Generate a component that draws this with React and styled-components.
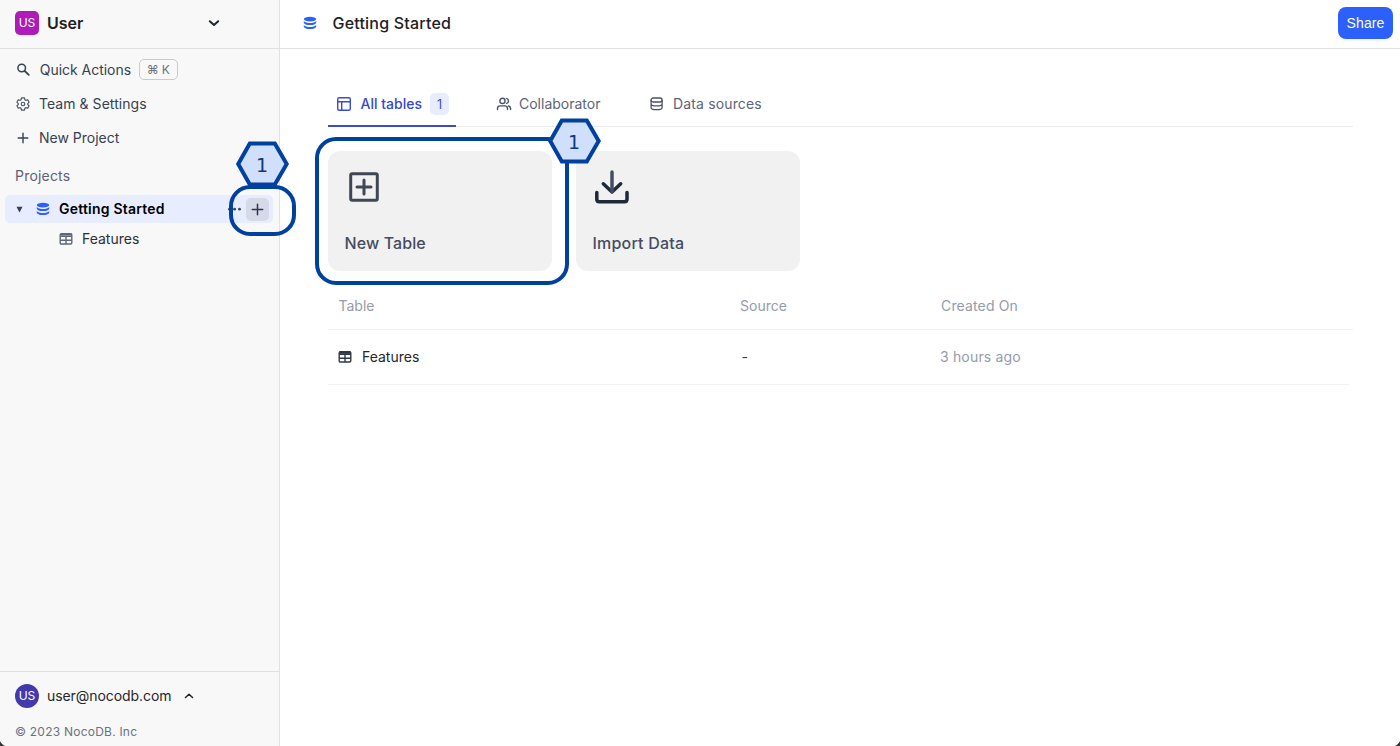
import React from 'react';
import styled, { createGlobalStyle } from 'styled-components';

const Global = createGlobalStyle`
  *, *::before, *::after { box-sizing: border-box; }
  body { margin: 0; overflow: hidden; font-family: Inter, sans-serif; font-size: 14px; color: #374151; }
  svg { display: block; flex: none; }
`;

const Shell = styled.div`
  position: relative;
  display: flex;
  width: 1400px;
  height: 746px;
  background: #fff;
  overflow: hidden;
`;

const Text = styled.span`
  font-size: ${(p) => p.$size || 14}px;
  font-weight: ${(p) => p.$weight || 400};
  letter-spacing: ${(p) => p.$track || 0}px;
  color: ${(p) => p.$color || '#374151'};
  line-height: 20px;
  white-space: nowrap;
`;

/* Sidebar */
const Sidebar = styled.aside`
  display: flex;
  flex-direction: column;
  width: 280px;
  flex: none;
  background: #f8f8f8;
  border-right: 1px solid #e1e1e3;
`;

const Workspace = styled.div`
  display: flex;
  align-items: center;
  height: 49px;
  padding: 0 59px 3px 15px;
  border-bottom: 1px solid #e1e1e3;
  gap: 8px;
  > svg { margin-left: auto; }
`;

const Avatar = styled.div`
  display: grid;
  place-items: center;
  width: 24px;
  height: 24px;
  flex: none;
  border-radius: ${(p) => (p.$round ? '50%' : '5px')};
  background: ${(p) => (p.$round ? '#4338ac' : '#af1bb8')};
  color: #fff;
  font-size: 12px;
  line-height: 24px;
`;

const Nav = styled.nav`
  display: flex;
  flex-direction: column;
  padding-top: 4px;
`;

const NavItem = styled.div`
  display: flex;
  align-items: center;
  height: 34px;
  padding-left: 15px;
  gap: ${(p) => p.$gap || 8}px;
`;

const IconBox = styled.span`
  display: grid;
  place-items: center;
  width: 16px;
  height: 16px;
`;

const Shortcut = styled.kbd`
  display: flex;
  align-items: center;
  justify-content: center;
  gap: 3px;
  width: 39px;
  height: 21px;
  margin: 0 0 1px -1px;
  border: 1px solid #c9cbd1;
  border-radius: 5px;
  font: 12px/18px Inter, sans-serif;
  color: #6b7280;
`;

const SectionTitle = styled.div`
  display: flex;
  height: 40px;
  align-items: center;
  padding: 2px 0 0 15px;
`;

const ProjectRow = styled.div`
  display: flex;
  align-items: center;
  width: 268px;
  height: 28px;
  margin-left: 5px;
  padding: 0 4px 0 10px;
  border-radius: 5px;
  background: #e7edff;
`;

const ProjectIcon = styled.span`
  margin: 0 9px 0 12px;
`;

const More = styled.span`
  margin-left: auto;
  margin-right: 4px;
`;

const AddButton = styled.button`
  display: grid;
  place-items: center;
  width: 23px;
  height: 23px;
  padding: 0;
  border: 0;
  border-radius: 5px;
  background: #d5d9e8;
`;

const TableItem = styled.div`
  display: flex;
  align-items: center;
  height: 32px;
  padding-left: 59px;
  gap: 9px;
`;

const SideFooter = styled.footer`
  display: flex;
  flex-direction: column;
  height: 75px;
  margin-top: auto;
  padding: 12px 0 0 15px;
  border-top: 1px solid #e1e1e3;
`;

const Account = styled.div`
  display: flex;
  align-items: center;
  height: 24px;
  gap: 8px;
  > svg { margin-left: 4px; }
`;

const Copyright = styled.div`
  margin-top: 14px;
`;

/* Main pane */
const Main = styled.main`
  display: flex;
  flex-direction: column;
  flex: 1;
  min-width: 0;
`;

const TopBar = styled.header`
  display: flex;
  align-items: center;
  height: 49px;
  padding: 0 7px 3px 23px;
  border-bottom: 1px solid #e1e1e3;
  gap: 15.5px;
`;

const ShareButton = styled.button`
  width: 55px;
  height: 32px;
  margin-left: auto;
  padding: 0;
  border: 0;
  border-radius: 8px;
  background: #2b60fb;
  box-shadow: 0 2px 2px rgba(0, 0, 0, 0.04);
`;

const Content = styled.section`
  display: flex;
  flex-direction: column;
  padding: 32px 47px 0 48px;
`;

const Tabs = styled.div`
  display: flex;
  height: 46px;
  border-bottom: 1px solid #ebebed;
`;

const Tab = styled.div`
  display: flex;
  align-items: center;
  height: 46px;
  width: ${(p) => p.$width}px;
  margin-right: ${(p) => p.$after || 0}px;
  padding: 2px 0 0 8px;
  gap: ${(p) => p.$gap || 8}px;
  border-bottom: 2px solid ${(p) => (p.$active ? '#3b4bce' : 'transparent')};
`;

const Count = styled.span`
  display: grid;
  place-items: center;
  width: 19px;
  height: 22px;
  padding-right: 1px;
  border-radius: 5px;
  background: #e7edff;
  color: #3548cf;
  font-size: 12.5px;
`;

const Cards = styled.div`
  display: flex;
  gap: 24px;
  padding-top: 24px;
`;

const Card = styled.div`
  display: flex;
  flex-direction: column;
  justify-content: space-between;
  width: 224px;
  height: 120px;
  padding: 16px 16px 18px;
  border-radius: 12px;
  background: #f1f1f1;
  > span { padding-left: 0.5px; }
`;

const Grid = styled.div`
  display: flex;
  flex-direction: column;
  padding-top: 12px;
`;

const Row = styled.div`
  display: grid;
  grid-template-columns: 402px 200px 1fr;
  align-items: center;
  height: ${(p) => p.$height}px;
  margin-right: ${(p) => p.$inset || 0}px;
  padding-left: 10px;
  border-bottom: 1px solid #f0f0f2;
`;

const Cell = styled.div`
  display: flex;
  align-items: center;
  gap: 10px;
  padding-left: ${(p) => p.$pad || 0}px;
`;

/* Annotation layer */
const Outline = styled.div`
  position: absolute;
  left: ${(p) => p.$x}px;
  top: ${(p) => p.$y}px;
  width: ${(p) => p.$w}px;
  height: ${(p) => p.$h}px;
  border: 4px solid #0041a0;
  border-radius: 21px;
`;

const Marker = styled.div`
  position: absolute;
  display: grid;
  place-items: center;
  left: ${(p) => p.$x}px;
  top: ${(p) => p.$y}px;
  width: 54px;
  height: 46px;
  font: 19px/46px "DejaVu Sans", sans-serif;
  color: #0b3a83;
  > * { grid-area: 1 / 1; }
  > span { padding: 2px 1px 0 0; line-height: 44px; }
`;

const Corner = styled.svg`
  position: absolute;
  bottom: 0;
  ${(p) => (p.$right ? 'right: 0; transform: scaleX(-1);' : 'left: 0;')}
`;

const Database = ({ size = 14 }) => (
  <svg width={size} height={size} viewBox="0 0 14 14" fill="#2b60fb">
    <ellipse cx="7" cy="3.1" rx="6.2" ry="2.3" />
    <path d="M.8 5C2 6.400 4.300 7 7 7s5-.6 6.200-2v1.400C13.200 7.900 10.300 9.100 7 9.100S.8 7.900.8 6.400z" />
    <path d="M.8 8.900C2 10.300 4.300 10.900 7 10.900s5-.6 6.200-2v1.600c0 1.400-2.900 2.600-6.200 2.600s-6.200-1.200-6.200-2.600z" />
  </svg>
);

const Search = () => (
  <svg width="16" height="16" viewBox="0 0 16 16" fill="none" stroke="#374151" strokeLinecap="round">
    <circle cx="6.700" cy="6" r="3.800" strokeWidth="1.500" />
    <path d="M9.700 9 13.800 12.900" strokeWidth="1.800" />
  </svg>
);

const Gear = () => (
  <svg width="14" height="14" viewBox="0 0 24 24" fill="none" stroke="#4a5264" strokeWidth="2" strokeLinejoin="round">
    <path d="M9.500 1.500h5l.8 3.300 1.500.9 3.300-1 2.400 4.200-2.400 2.400v1.500l2.400 2.300-2.400 4.200-3.300-1-1.500.9-.8 3.200h-5l-.8-3.200-1.500-.9-3.300 1-2.400-4.200 2.400-2.300v-1.500L1.500 8.900l2.400-4.200 3.300 1 1.500-.9z" />
    <circle cx="12" cy="12" r="3" />
  </svg>
);

const Plus = ({ size = 12, color = '#374151' }) => (
  <svg width={size} height={size} viewBox="0 0 12 12" stroke={color} strokeWidth="1.4" strokeLinecap="round">
    <path d="M6 1.200v9.600M1.200 6h9.600" />
  </svg>
);

const Chevron = ({ up, size = 12 }) => (
  <svg width={size} height={size} viewBox="0 0 12 12" fill="none" stroke={up ? '#222' : '#1f2937'} strokeWidth={up ? 1.5 : 2} strokeLinecap="round" strokeLinejoin="round">
    <path d={up ? 'M2.500 7.500l3.500-3.200 3.500 3.200' : 'M1.800 4.200 6 8l4.200-3.800'} />
  </svg>
);

const TableIcon = ({ color, head }) => (
  <svg width="14" height="14" viewBox="0 0 14 14" fill="none" stroke={color} strokeWidth="1.400">
    <rect x="1.200" y="1.700" width="11.600" height="10.300" rx="1.200" />
    <path d="M1.200 4.400h11.600M1.200 8.200h11.600M7 4.400v7.600" />
    <path d="M1.200 2.700h11.600" strokeWidth={head ? 2.400 : 1.800} />
  </svg>
);

const Layout = () => (
  <svg width="16" height="16" viewBox="0 0 16 16" fill="none" stroke="#3b4bce" strokeWidth="1.4">
    <rect x="1.700" y="1.700" width="12.600" height="12.600" rx="1.500" />
    <path d="M1.700 5.700h12.600M5.700 5.700v8.600" />
  </svg>
);

const Users = () => (
  <svg width="16" height="16" viewBox="0 0 16 16" fill="none" stroke="#4a5268" strokeWidth="1.400" strokeLinecap="round">
    <circle cx="6.500" cy="4.900" r="2.600" />
    <path d="M1.500 13.500v-1A2.600 2.600 0 0 1 4.100 9.900h4.800a2.600 2.600 0 0 1 2.600 2.600v1M10.600 2.400a2.600 2.600 0 0 1 0 5M12.600 10a2.600 2.600 0 0 1 2 2.500v1" />
  </svg>
);

const DataStack = () => (
  <svg width="16" height="16" viewBox="0 0 16 16" fill="none" stroke="#4a5268" strokeWidth="1.300">
    <rect x="2.100" y="2" width="11" height="4" rx="2" />
    <path d="M2.100 4v7.800c0 1.100 2 1.900 5.500 1.900s5.500-.8 5.500-1.900V4M2.100 8c0 1.100 2 1.900 5.500 1.900s5.500-.8 5.500-1.900" />
  </svg>
);

const NewTableIcon = () => (
  <svg width="40" height="40" viewBox="0 0 40 40" fill="none" stroke="#3f4656" strokeWidth="3" strokeLinecap="round">
    <rect x="6.700" y="6.700" width="26.600" height="26.600" rx="1.500" />
    <path d="M20 13v14M13 20h14" />
  </svg>
);

const ImportIcon = () => (
  <svg width="40" height="40" viewBox="0 0 40 40" fill="none" strokeWidth="3.500" strokeLinecap="round" strokeLinejoin="round">
    <path d="M4.800 25.500v6.800c0 1.600 1 2.500 2.500 2.500h25.200c1.600 0 2.500-1 2.500-2.500v-6.800M11.300 16.800 20 25l8.700-8.200" stroke="#1f2937" />
    <path d="M20 5V24.500" stroke="#454c61" />
  </svg>
);

const StepMarker = ({ x, y }) => (
  <Marker $x={x} $y={y}>
    <svg width="55" height="46" viewBox="0 0 55 46">
      <path d="M14.800 2.400h25L51.700 23 39.800 43.400h-25L3.200 23z" fill="#d0dffc" stroke="#0041a0" strokeWidth="4" />
    </svg>
    <span>1</span>
  </Marker>
);

const CornerEdge = ({ right }) => (
  <Corner $right={right} width="5" height="6" viewBox="0 0 5 6">
    <path d="M0 1.200Q1.500 4 4.800 6H0z" fill="#333" />
  </Corner>
);

export default function App() {
  return (
    <>
      <Global />
      <Shell>
        <Sidebar>
          <Workspace>
            <Avatar>US</Avatar>
            <Text $size={16} $weight={600} $color="#1f2023">User</Text>
            <Chevron />
          </Workspace>
          <Nav>
            <NavItem $gap={8.8}>
              <IconBox><Search /></IconBox>
              <Text $track={-0.03}>Quick Actions</Text>
              <Shortcut><span>⌘</span><span>K</span></Shortcut>
            </NavItem>
            <NavItem>
              <IconBox><Gear /></IconBox>
              <Text $track={0.05}>Team &amp; Settings</Text>
            </NavItem>
            <NavItem>
              <IconBox><Plus /></IconBox>
              <Text>New Project</Text>
            </NavItem>
          </Nav>
          <SectionTitle><Text $color="#5b6275" $track={0.2}>Projects</Text></SectionTitle>
          <ProjectRow>
            <svg width="9" height="8" viewBox="0 0 9 8" fill="#374151"><path d="M1.500 1.800h6L4.500 7.500z" /></svg>
            <ProjectIcon><Database /></ProjectIcon>
            <Text $weight={600} $color="#000" $track={0.22}>Getting Started</Text>
            <More>
              <svg width="14" height="4" viewBox="0 0 14 4" fill="#374151">
                <circle cx="1.500" cy="2.200" r="1.400" /><circle cx="6.600" cy="2.200" r="1.400" /><circle cx="11.500" cy="2.200" r="1.400" />
              </svg>
            </More>
            <AddButton><Plus size={13} color="#303643" /></AddButton>
          </ProjectRow>
          <TableItem>
            <TableIcon color="#5f6678" />
            <Text $color="#2d2f36">Features</Text>
          </TableItem>
          <SideFooter>
            <Account>
              <Avatar $round>US</Avatar>
              <Text $color="#26272b" $track={-0.07}>user@nocodb.com</Text>
              <Chevron up />
            </Account>
            <Copyright><Text $size={12} $color="#6b7280" $track={0.23}>© 2023 NocoDB. Inc</Text></Copyright>
          </SideFooter>
        </Sidebar>
        <Main>
          <TopBar>
            <Database />
            <Text $size={16} $weight={500} $color="#1f2023" $track={0.2}>Getting Started</Text>
            <ShareButton><Text $weight={500} $color="#fff" $track={0.1}>Share</Text></ShareButton>
          </TopBar>
          <Content>
            <Tabs>
              <Tab $active $width={128} $after={32} $gap={8.500}>
                <Layout />
                <Text $weight={500} $color="#3548cf">All tables</Text>
                <Count>1</Count>
              </Tab>
              <Tab $width={121} $after={32} $gap={7}>
                <Users />
                <Text $color="#5d6478">Collaborator</Text>
              </Tab>
              <Tab $width={128} $gap={8}>
                <DataStack />
                <Text $color="#5d6478" $track={0.15}>Data sources</Text>
              </Tab>
            </Tabs>
            <Cards>
              <Card>
                <NewTableIcon />
                <Text $size={16} $weight={500} $color="#454c61" $track={0.1}>New Table</Text>
              </Card>
              <Card>
                <ImportIcon />
                <Text $size={16} $weight={500} $color="#454c61" $track={0.2}>Import Data</Text>
              </Card>
            </Cards>
            <Grid>
              <Row $height={47}>
                <Cell $pad={0.5}><Text $color="#949bab">Table</Text></Cell>
                <Cell><Text $color="#949bab">Source</Text></Cell>
                <Cell $pad={1}><Text $color="#949bab" $track={0.15}>Created On</Text></Cell>
              </Row>
              <Row $height={55} $inset={4}>
                <Cell><TableIcon color="#303846" head /><Text $color="#26272b">Features</Text></Cell>
                <Cell $pad={1.5}><Text>-</Text></Cell>
                <Cell><Text $color="#949bab" $track={0.17}>3 hours ago</Text></Cell>
              </Row>
            </Grid>
          </Content>
        </Main>
        <Outline $x={229} $y={185} $w={67} $h={51} />
        <Outline $x={315} $y={137} $w={254} $h={148} />
        <StepMarker x={235} y={141} />
        <StepMarker x={547} y={118} />
        <CornerEdge />
        <CornerEdge right />
      </Shell>
    </>
  );
}
